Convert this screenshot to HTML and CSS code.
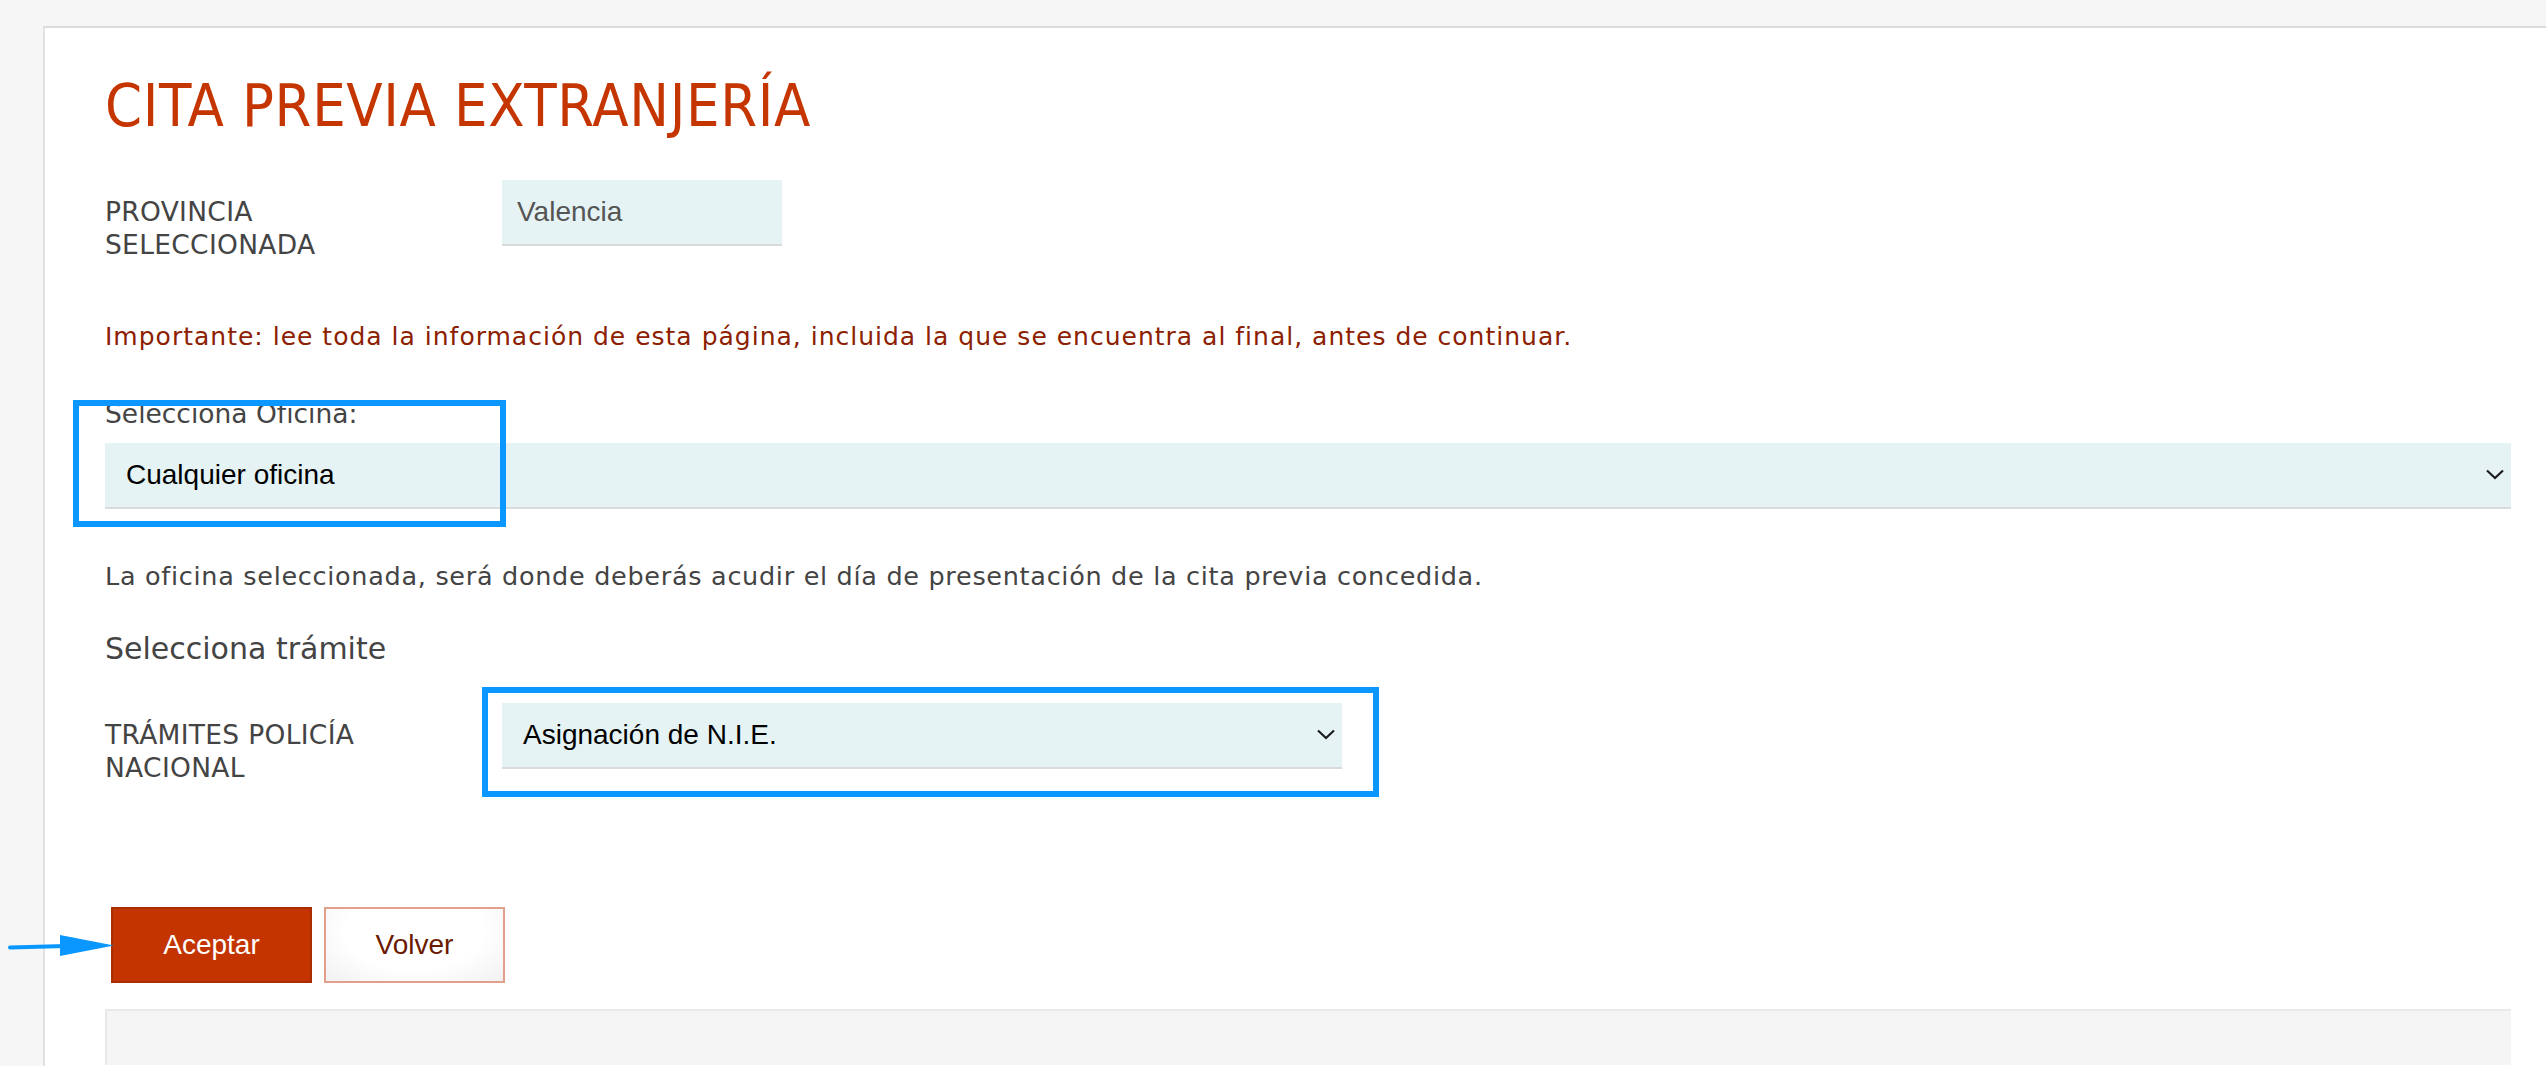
FILE: index.html
```html
<!DOCTYPE html>
<html lang="es">
<head>
<meta charset="utf-8">
<title>Cita previa extranjería</title>
<link rel="stylesheet" href="styles.css">
</head>
<body>
<div class="page">
  <main class="panel">
    <h1 class="title">CITA PREVIA EXTRANJERÍA</h1>

    <div class="row row-provincia">
      <div class="label">PROVINCIA<br>SELECCIONADA</div>
      <div class="field field-short"><span class="field-text muted">Valencia</span></div>
    </div>

    <p class="important">Importante: lee toda la información de esta página, incluida la que se encuentra al final, antes de continuar.</p>

    <div class="oficina">
      <div class="field-label">Selecciona Oficina:</div>
      <div class="field select select-wide">
        <span class="field-text">Cualquier oficina</span>
        <svg class="chevron" width="18" height="11" viewBox="0 0 18 11"><path d="M1 1.5 L9 9 L17 1.5" fill="none" stroke="#1d1d1d" stroke-width="2.2"/></svg>
      </div>
      <div class="highlight highlight-oficina"></div>
    </div>

    <p class="note">La oficina seleccionada, será donde deberás acudir el día de presentación de la cita previa concedida.</p>

    <h2 class="subtitle">Selecciona trámite</h2>

    <div class="row row-tramite">
      <div class="label">TRÁMITES POLICÍA<br>NACIONAL</div>
      <div class="field select select-mid">
        <span class="field-text">Asignación de N.I.E.</span>
        <svg class="chevron" width="18" height="11" viewBox="0 0 18 11"><path d="M1 1.5 L9 9 L17 1.5" fill="none" stroke="#1d1d1d" stroke-width="2.2"/></svg>
      </div>
      <div class="highlight highlight-tramite"></div>
    </div>

    <div class="actions">
      <svg class="arrow" width="108" height="24" viewBox="0 0 108 24"><path d="M2 13.5 L58 12" stroke="#0a97ff" stroke-width="4" stroke-linecap="round" fill="none"/><path d="M52 1 L106 11.5 L52 22 Z" fill="#0a97ff"/></svg>
      <button class="btn btn-primary" type="button">Aceptar</button>
      <button class="btn btn-secondary" type="button">Volver</button>
    </div>

    <div class="info-box"></div>
  </main>
</div>
</body>
</html>
```

FILE: styles.css
```css
html, body {
  margin: 0;
  padding: 0;
  background: #f6f6f6;
  height: 100%;
  overflow: hidden;
}

.page {
  display: flex;
  flex-direction: column;
  padding-top: 26px;
  padding-left: 43px;
  height: 100%;
  box-sizing: border-box;
}

.panel {
  flex: 1;
  background: #ffffff;
  border-top: 2px solid #dcdcdc;
  border-left: 2px solid #e2e2e2;
  padding: 0 35px 0 60px;
  font-family: "DejaVu Sans", "Open Sans", sans-serif;
  color: #444444;
}

.title {
  margin: 48px 0 0 0;
  font-family: "DejaVu Sans Condensed", "DejaVu Sans", sans-serif;
  font-stretch: condensed;
  font-weight: normal;
  font-size: 59px;
  line-height: 59px;
  letter-spacing: 0.65px;
  color: #c43500;
}

.row {
  display: flex;
  align-items: baseline;
  position: relative;
}

.row-provincia {
  margin-top: 45px;
}

.label {
  flex: 0 0 397px;
  font-size: 26.5px;
  line-height: 33.3px;
  letter-spacing: 0.3px;
  color: #444444;
}

.field {
  display: flex;
  align-items: center;
  background: #e5f3f4;
  border-bottom: 2px solid #d8dadb;
  font-family: "Liberation Sans", Arial, sans-serif;
  font-size: 28px;
  color: #000000;
}

.field-short {
  width: 280px;
  padding-left: 15px;
  box-sizing: border-box;
  height: 66px;
}

.field-text.muted {
  color: #555555;
}

.select {
  justify-content: space-between;
  padding-left: 21px;
  padding-right: 7px;
  box-sizing: border-box;
  height: 66px;
}

.select-wide {
  width: 100%;
}

.select-mid {
  width: 840px;
}

.chevron {
  display: block;
  flex: none;
}

.important {
  margin: 60px 0 0 0;
  font-size: 25px;
  line-height: 30px;
  letter-spacing: 1px;
  color: #8c2000;
}

.oficina {
  position: relative;
  margin-top: 45px;
}

.field-label {
  font-size: 26.5px;
  line-height: 33px;
  color: #444444;
  margin-bottom: 13px;
}

.note {
  margin: 52px 0 0 0;
  font-size: 25.5px;
  line-height: 31px;
  letter-spacing: 0.7px;
  color: #444444;
}

.subtitle {
  margin: 39px 0 0 0;
  font-weight: normal;
  font-size: 30px;
  line-height: 36px;
  color: #444444;
}

.row-tramite {
  margin-top: 36px;
}

.highlight {
  position: absolute;
  border: 6px solid #0a97ff;
  box-sizing: border-box;
  pointer-events: none;
}

.highlight-oficina {
  left: -32px;
  top: 3px;
  width: 433px;
  height: 127px;
}

.highlight-tramite {
  left: 377px;
  top: -16px;
  width: 897px;
  height: 110px;
}

.actions {
  position: relative;
  display: flex;
  gap: 12px;
  margin-top: 123px;
  padding-left: 6px;
}

.arrow {
  position: absolute;
  left: -97px;
  top: 27px;
}

.btn {
  height: 76px;
  font-family: "Liberation Sans", Arial, sans-serif;
  font-size: 28px;
  cursor: pointer;
  box-sizing: border-box;
  padding: 0;
}

.btn-primary {
  width: 201px;
  background: #c33400;
  border: 2px solid #a82e00;
  color: #ffffff;
}

.btn-secondary {
  width: 181px;
  background: radial-gradient(ellipse at 50% 30%, #ffffff 55%, #f1f1f1 100%);
  border: 2px solid #e2a08b;
  color: #6a1a00;
}

.info-box {
  margin-top: 26px;
  height: 54px;
  background: #f5f5f5;
  border-top: 2px solid #e9e9e9;
  border-left: 2px solid #e9e9e9;
}
```
